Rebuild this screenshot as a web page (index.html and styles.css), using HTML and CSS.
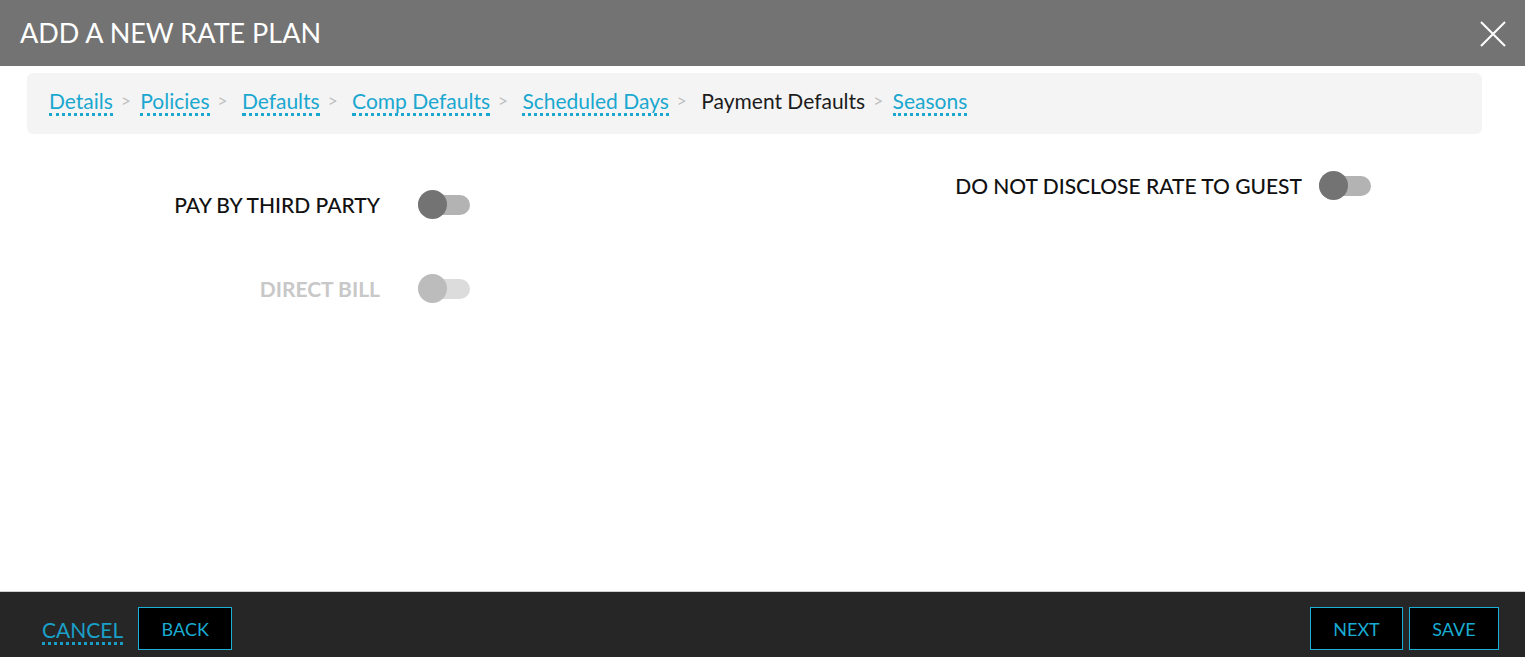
FILE: index.html
```html
<!DOCTYPE html>
<html>
<head>
<meta charset="utf-8">
<link rel="stylesheet" href="styles.css">
</head>
<body>
<div class="page">
  <header class="header">
    <h1 class="title">ADD A NEW RATE PLAN</h1>
    <button class="close" aria-label="Close">
      <svg width="26" height="26" viewBox="0 0 26 26"><path d="M1 1 L25 25 M25 1 L1 25" stroke="#fff" stroke-width="2" fill="none"/></svg>
    </button>
  </header>
  <nav class="crumbs">
    <a class="crumb">Details</a><span class="sep">&gt;</span>
    <a class="crumb">Policies</a><span class="sep">&gt;</span>
    <a class="crumb spaced">Defaults</a><span class="sep">&gt;</span>
    <a class="crumb spaced">Comp Defaults</a><span class="sep">&gt;</span>
    <a class="crumb spaced">Scheduled Days</a><span class="sep">&gt;</span>
    <span class="current spaced">Payment Defaults</span><span class="sep">&gt;</span>
    <a class="crumb">Seasons</a>
  </nav>
  <main class="main">
    <div class="col-left">
      <div class="field">
        <span class="label">PAY BY THIRD PARTY</span>
        <span class="toggle"><span class="knob"></span></span>
      </div>
      <div class="field disabled">
        <span class="label">DIRECT BILL</span>
        <span class="toggle"><span class="knob"></span></span>
      </div>
    </div>
    <div class="col-right">
      <div class="field-inline">
        <span class="label">DO NOT DISCLOSE RATE TO GUEST</span>
        <span class="toggle"><span class="knob"></span></span>
      </div>
    </div>
  </main>
  <footer class="footer">
    <div class="footer-left">
      <a class="cancel">CANCEL</a>
      <button class="btn">BACK</button>
    </div>
    <div class="footer-right">
      <button class="btn btn-next">NEXT</button>
      <button class="btn btn-save">SAVE</button>
    </div>
  </footer>
</div>
</body>
</html>
```
FILE: styles.css
```css
* { box-sizing: border-box; }
html, body { margin: 0; padding: 0; }
body {
  font-family: Lato, "Open Sans", "Liberation Sans", sans-serif;
  background: #fff;
  width: 1525px;
  height: 657px;
  overflow: hidden;
}
.page {
  display: flex;
  flex-direction: column;
  height: 657px;
}
.header {
  height: 66px;
  background: #737373;
  display: flex;
  align-items: center;
  justify-content: space-between;
  padding: 0 19px 0 20px;
  flex: none;
}
.title {
  margin: 0;
  font-size: 27px;
  font-weight: 400;
  color: #fff;
  line-height: 1;
  padding-bottom: 1px;
}
.close {
  background: none;
  border: 0;
  padding: 0;
  width: 26px;
  height: 26px;
  display: flex;
  margin-top: 1px;
}
.crumbs {
  margin: 7px 43px 0 27px;
  height: 61px;
  background: #f4f4f4;
  border-radius: 6px;
  display: flex;
  align-items: center;
  padding: 0 0 5px 22px;
  font-size: 21px;
  flex: none;
}
.crumb {
  color: #1aa8d0;
  border-bottom: 3px dotted #1aa8d0;
  line-height: 24px;
  margin-top: 2px;
}
.current {
  color: #1c1c1c;
  line-height: 24px;
  margin-top: -1px;
}
.spaced { margin-left: 5px; }
.sep {
  color: #bdbdbd;
  font-size: 17px;
  margin: -2px 9.5px 0 8px;
}
.main {
  flex: 1;
  display: flex;
}
.col-left {
  width: 762px;
  padding-top: 56px;
  display: flex;
  flex-direction: column;
  gap: 54px;
}
.field {
  display: grid;
  grid-template-columns: 380px 52px;
  column-gap: 38px;
  align-items: center;
  height: 30px;
}
.field .label { text-align: right; }
.label {
  font-size: 21px;
  font-weight: 500;
  color: #111;
  line-height: 30px;
}
.disabled .label { color: #c8c8c8; font-weight: 700; }
.col-right {
  flex: 1;
  display: flex;
  justify-content: flex-end;
  padding-top: 37px;
  padding-right: 154px;
}
.field-inline {
  display: flex;
  align-items: center;
  gap: 17px;
  height: 30px;
}
.toggle {
  position: relative;
  display: block;
  width: 52px;
  height: 20px;
  border-radius: 10px;
  background: #b3b3b3;
}
.knob {
  position: absolute;
  left: 0;
  top: -5px;
  width: 29px;
  height: 29px;
  border-radius: 50%;
  background: #737373;
}
.disabled .toggle { background: #dcdcdc; }
.disabled .knob { background: #bcbcbc; }
.footer {
  height: 66px;
  flex: none;
  background: #262626;
  border-top: 1px solid #cfcfcf;
  display: flex;
  justify-content: space-between;
  align-items: flex-start;
  padding: 15px 26px 0 42px;
}
.footer-left, .footer-right {
  display: flex;
  align-items: flex-start;
}
.footer-right { gap: 6px; }
.cancel {
  color: #1aa0c8;
  font-size: 21px;
  line-height: 24px;
  margin-top: 11px;
  border-bottom: 3px dotted #1aa0c8;
  margin-right: 15px;
}
.btn {
  font-family: Lato, "Open Sans", "Liberation Sans", sans-serif;
  height: 43px;
  background: #000;
  border: 1px solid #1ab0d8;
  color: #1aabd2;
  font-size: 18px;
  padding: 0;
  width: 94px;
}
.btn-next { width: 93px; }
.btn-save { width: 90px; }
```
